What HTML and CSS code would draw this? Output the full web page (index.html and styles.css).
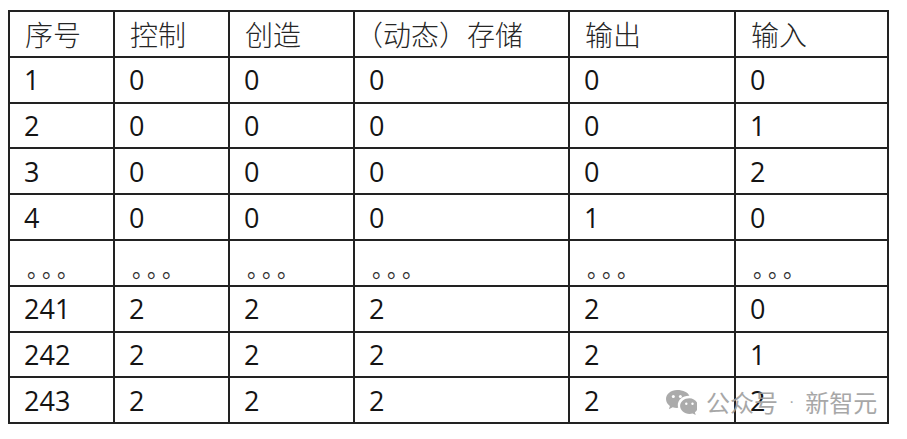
FILE: index.html
```html
<!DOCTYPE html>
<html lang="zh">
<head>
<meta charset="utf-8">
<link rel="stylesheet" href="styles.css">
</head>
<body>
<div class="page">
  <table class="grid">
    <colgroup>
      <col class="c1"><col class="c2"><col class="c3"><col class="c4"><col class="c5"><col class="c6">
    </colgroup>
    <thead>
      <tr><th>序号</th><th>控制</th><th>创造</th><th>（动态）存储</th><th>输出</th><th>输入</th></tr>
    </thead>
    <tbody>
      <tr><td>1</td><td>0</td><td>0</td><td>0</td><td>0</td><td>0</td></tr>
      <tr><td>2</td><td>0</td><td>0</td><td>0</td><td>0</td><td>1</td></tr>
      <tr><td>3</td><td>0</td><td>0</td><td>0</td><td>0</td><td>2</td></tr>
      <tr><td>4</td><td>0</td><td>0</td><td>0</td><td>1</td><td>0</td></tr>
      <tr class="dots"><td>。。。</td><td>。。。</td><td>。。。</td><td>。。。</td><td>。。。</td><td>。。。</td></tr>
      <tr><td>241</td><td>2</td><td>2</td><td>2</td><td>2</td><td>0</td></tr>
      <tr><td>242</td><td>2</td><td>2</td><td>2</td><td>2</td><td>1</td></tr>
      <tr><td>243</td><td>2</td><td>2</td><td>2</td><td>2</td><td>2</td></tr>
    </tbody>
  </table>
  <div class="watermark">
    <svg class="wx" width="32" height="26" viewBox="0 0 32 26">
      <path d="M12 1C5.9 1 1 5 1 10c0 2.8 1.5 5.3 3.9 7l-1 3.3 3.8-2c1.3.4 2.7.6 4.3.6.4 0 .8 0 1.2-.1-.3-.9-.4-1.8-.4-2.7 0-5.2 4.9-9.300 10.9-9.3h.7C23.3 3.7 18.2 1 12 1z" fill="#a3a3a3"/>
      <circle cx="8.3" cy="7.6" r="1.5" fill="#fff"/>
      <circle cx="15.4" cy="7.6" r="1.5" fill="#fff"/>
      <path d="M24.5 9.3c-5.2 0-9.4 3.5-9.4 7.8s4.2 7.8 9.4 7.8c1.1 0 2.2-.2 3.2-.5l3 1.6-.8-2.7c2-1.4 3.1-3.5 3.1-6.2 0-4.3-4.3-7.8-8.5-7.8z" fill="#a3a3a3"/>
      <circle cx="21.3" cy="14.8" r="1.2" fill="#fff"/>
      <circle cx="27.5" cy="14.8" r="1.2" fill="#fff"/>
    </svg>
    <span class="wm-text">公众号<span class="mid">·</span>新智元</span>
  </div>
</div>
</body>
</html>
```

FILE: styles.css
```css
html, body {
  margin: 0;
  padding: 0;
  background: #ffffff;
}
.page {
  position: relative;
  width: 907px;
  height: 439px;
  overflow: hidden;
  padding: 10px 0 0 8px;
  box-sizing: border-box;
}
.grid {
  border-collapse: collapse;
  table-layout: fixed;
  width: 881px;
  font-family: "Open Sans", "Noto Sans CJK SC", sans-serif;
  font-size: 27px;
  color: #141414;
}
.c1 { width: 105px; }
.c2 { width: 115px; }
.c3 { width: 125px; }
.c4 { width: 215px; }
.c5 { width: 166px; }
.c6 { width: 153px; }
.grid tr {
  height: 45.8px;
}
.grid th,
.grid td {
  border: 2px solid #222222;
  height: auto;
  padding: 0 0 0 14px;
  text-align: left;
  vertical-align: middle;
  line-height: 1;
  white-space: nowrap;
}
.grid th {
  font-family: "Noto Sans CJK SC", sans-serif;
  font-weight: 300;
  font-size: 28px;
  padding-left: 15px;
  color: #262626;
}
.grid th:nth-child(4) {
  padding-left: 0;
}
.dots td {
  font-family: "Noto Sans CJK SC", sans-serif;
  font-size: 22px;
  text-spacing-trim: space-all;
  letter-spacing: -7px;
  padding-left: 17px;
  padding-top: 8px;
  color: #333333;
}
.watermark {
  position: absolute;
  left: 665px;
  top: 389px;
  display: flex;
  align-items: center;
  gap: 9px;
  opacity: 0.9;
}
.wm-text {
  font-family: "Noto Sans CJK SC", sans-serif;
  font-size: 24px;
  color: #9e9e9e;
  line-height: 1;
  display: flex;
  align-items: center;
}
.mid {
  font-family: "Liberation Sans", sans-serif;
  font-size: 16px;
  padding: 0 11px;
}
```
